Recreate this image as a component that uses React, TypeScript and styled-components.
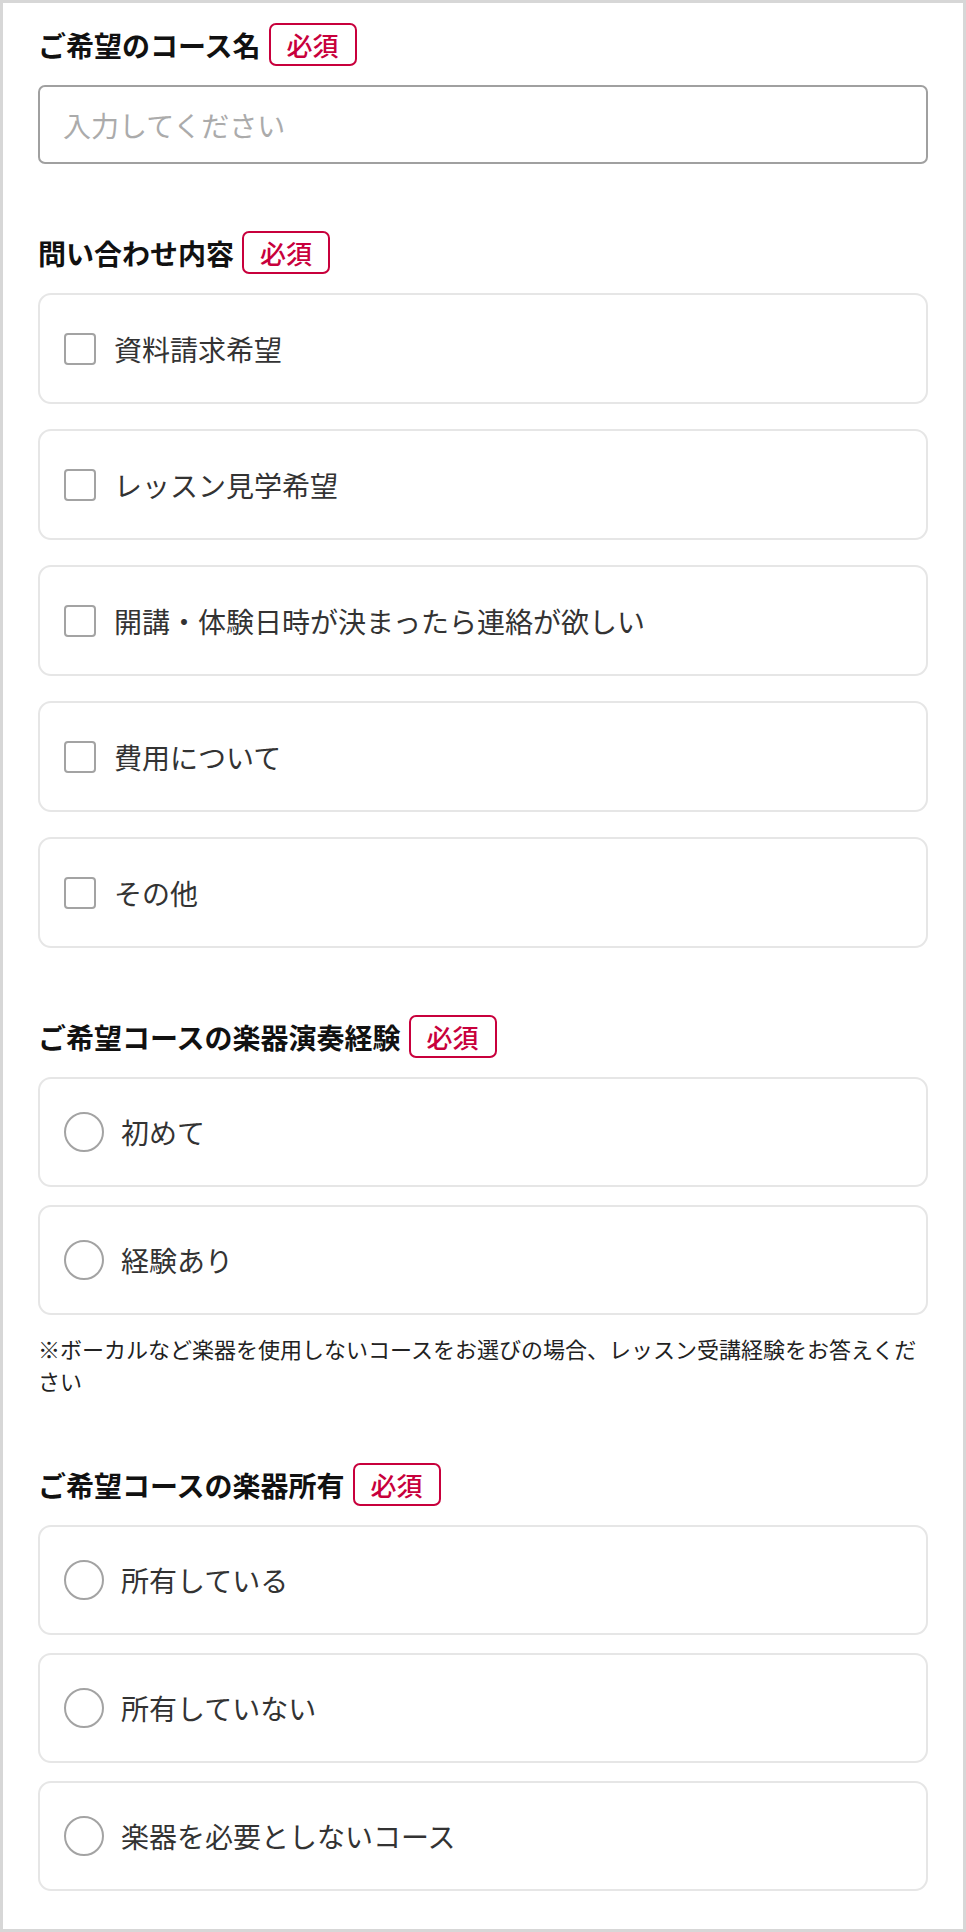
import styled, { createGlobalStyle } from "styled-components";

const GlobalStyle = createGlobalStyle`
  html, body {
    margin: 0;
    padding: 0;
    background: #fff;
  }
  body {
    font-family: "Noto Sans CJK JP", "Noto Sans", sans-serif;
    color: #222;
  }
  * {
    box-sizing: border-box;
  }
`;

const COLORS = {
  frame: "#d7d7d7",
  title: "#111111",
  label: "#333333",
  required: "#c8003c",
  inputBorder: "#a0a0a0",
  cardBorder: "#e6e6e6",
  control: "#a3a3a3",
  placeholder: "#ababab",
};

const inquiryOptions = [
  "資料請求希望",
  "レッスン見学希望",
  "開講・体験日時が決まったら連絡が欲しい",
  "費用について",
  "その他",
];

const experienceOptions = ["初めて", "経験あり"];
const ownershipOptions = ["所有している", "所有していない", "楽器を必要としないコース"];

const App = () => {
  return (
    <>
      <GlobalStyle />
      <FormWrapper>
        <Section>
          <Heading title="ご希望のコース名" />
          <TextInput type="text" placeholder="入力してください" />
        </Section>

        <Section>
          <Heading title="問い合わせ内容" />
          <OptionList $gap={25}>
            {inquiryOptions.map((label) => (
              <OptionCard key={label} $height={111}>
                <Checkbox type="checkbox" name="inquiry" />
                <OptionText $offset={18}>{label}</OptionText>
              </OptionCard>
            ))}
          </OptionList>
        </Section>

        <Section>
          <Heading title="ご希望コースの楽器演奏経験" />
          <OptionList $gap={18}>
            {experienceOptions.map((label) => (
              <OptionCard key={label} $height={110}>
                <Radio type="radio" name="experience" />
                <OptionText $offset={17}>{label}</OptionText>
              </OptionCard>
            ))}
          </OptionList>
          <Note>
            ※ボーカルなど楽器を使用しないコースをお選びの場合、レッスン受講経験をお答えください
          </Note>
        </Section>

        <Section>
          <Heading title="ご希望コースの楽器所有" />
          <OptionList $gap={18}>
            {ownershipOptions.map((label) => (
              <OptionCard key={label} $height={110}>
                <Radio type="radio" name="ownership" />
                <OptionText $offset={17}>{label}</OptionText>
              </OptionCard>
            ))}
          </OptionList>
        </Section>
      </FormWrapper>
    </>
  );
};

const Heading = ({ title }: { title: string }) => (
  <TitleRow>
    <Title>{title}</Title>
    <RequiredBadge>必須</RequiredBadge>
  </TitleRow>
);

export default App;

const FormWrapper = styled.div`
  width: 966px;
  border: 3px solid ${COLORS.frame};
  padding: 20px 35px 38px;
  display: flex;
  flex-direction: column;
  gap: 67px;
`;

const Section = styled.section`
  display: flex;
  flex-direction: column;
`;

const TitleRow = styled.div`
  display: flex;
  align-items: center;
  gap: 8px;
  height: 43px;
  margin-bottom: 19px;
`;

const Title = styled.h2`
  margin: 0;
  font-size: 28px;
  line-height: 1;
  font-weight: 700;
  color: ${COLORS.title};
  letter-spacing: 0;
`;

const RequiredBadge = styled.span`
  display: inline-flex;
  align-items: center;
  justify-content: center;
  height: 43px;
  padding: 0 16px;
  border: 2px solid ${COLORS.required};
  border-radius: 7px;
  color: ${COLORS.required};
  font-size: 26px;
  line-height: 1;
  font-weight: 500;
`;

const TextInput = styled.input`
  width: 100%;
  height: 79px;
  padding: 0 23px;
  border: 2px solid ${COLORS.inputBorder};
  border-radius: 7px;
  font-family: inherit;
  font-size: 28px;
  color: #222;
  outline: none;

  &::placeholder {
    color: ${COLORS.placeholder};
  }
`;

const OptionList = styled.div<{ $gap: number }>`
  display: flex;
  flex-direction: column;
  gap: ${(p) => p.$gap}px;
`;

const OptionCard = styled.label<{ $height: number }>`
  display: flex;
  align-items: center;
  height: ${(p) => p.$height}px;
  padding: 0 24px;
  border: 2px solid ${COLORS.cardBorder};
  border-radius: 13px;
  background: #fff;
  cursor: pointer;
`;

const Checkbox = styled.input`
  appearance: none;
  margin: 0;
  flex: none;
  width: 32px;
  height: 32px;
  border: 2px solid ${COLORS.control};
  border-radius: 4px;
  background: #fff;
`;

const Radio = styled.input`
  appearance: none;
  margin: 0;
  flex: none;
  width: 40px;
  height: 40px;
  border: 2px solid ${COLORS.control};
  border-radius: 50%;
  background: #fff;
`;

const OptionText = styled.span<{ $offset: number }>`
  margin-left: ${(p) => p.$offset}px;
  font-size: 28px;
  line-height: 1;
  color: ${COLORS.label};
`;

const Note = styled.p`
  margin: 17px 0 0;
  font-size: 22px;
  line-height: 32px;
  color: #222;
`;
